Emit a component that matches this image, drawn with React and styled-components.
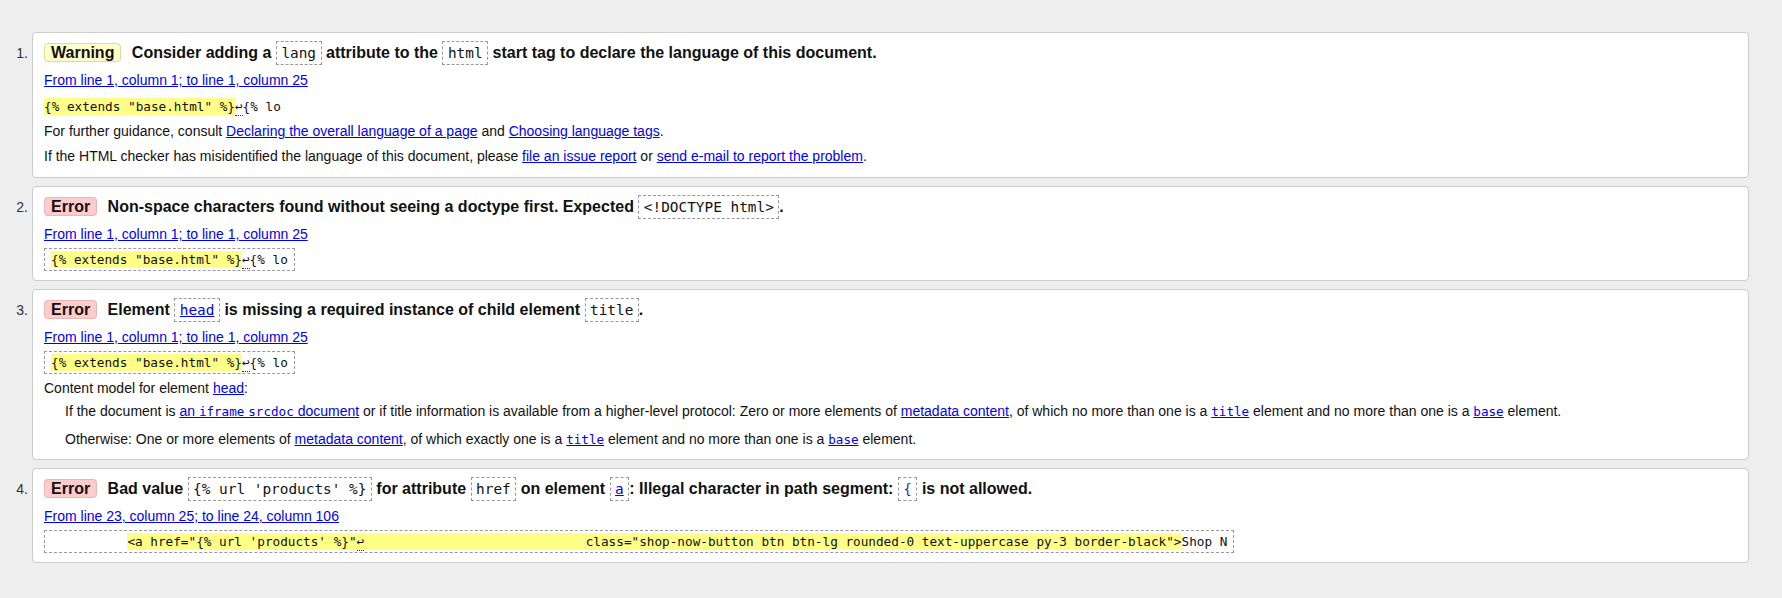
import React from "react";
import styled, { createGlobalStyle } from "styled-components";

const GlobalStyle = createGlobalStyle`
  html, body {
    margin: 0;
    padding: 0;
    background: #eee;
  }
  body {
    font-family: "Liberation Sans", Arial, sans-serif;
    font-size: 14px;
    color: #111;
  }
`;

const MessageList = styled.ol`
  margin: 0;
  padding: 32px 33px 30px 0;
  list-style: none;
`;

const Row = styled.li`
  display: flex;
  align-items: flex-start;
  & + li {
    margin-top: 8px;
  }
`;

const Number = styled.div`
  flex: 0 0 32px;
  box-sizing: border-box;
  padding: 9px 4px 0 0;
  text-align: right;
  line-height: 24px;
  color: #333;
`;

const Card = styled.div`
  flex: 1;
  min-width: 0;
  background: #fff;
  border: 1px solid #ccc;
  border-radius: 4px;
  padding: 8px 11px;
`;

const Title = styled.p`
  margin: 0;
  font-size: 16px;
  font-weight: bold;
  line-height: 24px;
  white-space: nowrap;
`;

const Badge = styled.span`
  padding: 0 6px;
  margin-right: 6px;
  border: 1px solid ${(p) => (p.$type === "warning" ? "#deda9e" : "#e6b9b9")};
  border-radius: 4px;
  background: ${(p) => (p.$type === "warning" ? "#ffc" : "#fcc")};
`;

const Code = styled.code`
  font-family: "DejaVu Sans Mono", "Liberation Mono", monospace;
  font-size: 14.4px;
  font-weight: normal;
  border: 1px dashed #999;
  padding: 3px 4.5px;
  color: ${(p) => p.$color || "inherit"};
`;

const Link = styled.a`
  color: #0000f0;
  text-decoration: underline;
  cursor: pointer;
`;

const CodeLink = styled(Link)`
  font-family: "DejaVu Sans Mono", "Liberation Mono", monospace;
  font-size: 12.6px;
`;

const Location = styled.p`
  margin: 3px 0 0;
  line-height: 25px;
`;

const ExtractLine = styled.p`
  margin: ${(p) => (p.$boxed ? "0" : "1px 0 0")};
  line-height: 25px;
  white-space: nowrap;
`;

const Extract = styled.code`
  font-family: "DejaVu Sans Mono", "Liberation Mono", monospace;
  font-size: 12.7px;
  line-height: 20px;
  white-space: pre;
  padding: ${(p) => (p.$boxed ? "3px 6px" : "0")};
  border: ${(p) => (p.$boxed ? "1px dashed #999" : "none")};
`;

const Mark = styled.mark`
  background: #ff8;
  color: inherit;
  padding: 1px 0;
`;

const LineFeed = styled.span`
  padding-bottom: 1px;
  border-bottom: 1px dotted #333;
`;

const Text = styled.p`
  margin: 0;
  line-height: 25px;
`;

const ModelList = styled.dl`
  margin: 0 0 1px;
`;

const ModelTerm = styled.dt`
  margin: 1px 0 0;
  line-height: 25px;
`;

const ModelItem = styled.dd`
  margin: 0 0 0 21px;
  line-height: 20px;
  & + dd {
    margin-top: 7px;
  }
`;

const Message = ({ n, type, title, location, extract, boxed, children }) => (
  <Row>
    <Number>{n}.</Number>
    <Card>
      <Title>
        <Badge $type={type}>{type === "warning" ? "Warning" : "Error"}</Badge>{" "}
        {title}
      </Title>
      <Location>
        <Link>{location}</Link>
      </Location>
      <ExtractLine $boxed={boxed}>
        <Extract $boxed={boxed}>{extract}</Extract>
      </ExtractLine>
      {children}
    </Card>
  </Row>
);

const baseExtract = (
  <>
    <Mark>{'{% extends "base.html" %}'}</Mark>
    <LineFeed>↩</LineFeed>
    {"{% lo"}
  </>
);

const anchorExtract = (
  <>
    {"          "}
    <Mark>
      {`<a href="{% url 'products' %}"`}
      <LineFeed>↩</LineFeed>
      {`                             class="shop-now-button btn btn-lg rounded-0 text-uppercase py-3 border-black">`}
    </Mark>
    {"Shop N"}
  </>
);

const App = () => (
  <>
    <GlobalStyle />
    <MessageList>
      <Message
        n={1}
        type="warning"
        location="From line 1, column 1; to line 1, column 25"
        extract={baseExtract}
        title={
          <>
            Consider adding a <Code>lang</Code> attribute to the{" "}
            <Code>html</Code> start tag to declare the language of this
            document.
          </>
        }
      >
        <Text>
          For further guidance, consult{" "}
          <Link>Declaring the overall language of a page</Link> and{" "}
          <Link>Choosing language tags</Link>.
        </Text>
        <Text>
          If the HTML checker has misidentified the language of this document,
          please <Link>file an issue report</Link> or{" "}
          <Link>send e-mail to report the problem</Link>.
        </Text>
      </Message>

      <Message
        n={2}
        type="error"
        boxed
        location="From line 1, column 1; to line 1, column 25"
        extract={baseExtract}
        title={
          <>
            Non-space characters found without seeing a doctype first.
            Expected <Code>{"<!DOCTYPE html>"}</Code>.
          </>
        }
      />

      <Message
        n={3}
        type="error"
        boxed
        location="From line 1, column 1; to line 1, column 25"
        extract={baseExtract}
        title={
          <>
            Element{" "}
            <Code>
              <Link>head</Link>
            </Code>{" "}
            is missing a required instance of child element <Code>title</Code>.
          </>
        }
      >
        <ModelList>
          <ModelTerm>
            Content model for element <Link>head</Link>:
          </ModelTerm>
          <ModelItem>
            If the document is{" "}
            <Link>
              an <CodeLink as="code">iframe</CodeLink>{" "}
              <CodeLink as="code">srcdoc</CodeLink> document
            </Link>{" "}
            or if title information is available from a higher-level protocol:
            Zero or more elements of <Link>metadata content</Link>, of which no
            more than one is a <CodeLink>title</CodeLink> element and no more
            than one is a <CodeLink>base</CodeLink> element.
          </ModelItem>
          <ModelItem>
            Otherwise: One or more elements of <Link>metadata content</Link>,
            of which exactly one is a <CodeLink>title</CodeLink> element and no
            more than one is a <CodeLink>base</CodeLink> element.
          </ModelItem>
        </ModelList>
      </Message>

      <Message
        n={4}
        type="error"
        boxed
        location="From line 23, column 25; to line 24, column 106"
        extract={anchorExtract}
        title={
          <>
            Bad value <Code>{"{% url 'products' %}"}</Code> for attribute{" "}
            <Code>href</Code> on element{" "}
            <Code>
              <Link>a</Link>
            </Code>
            : Illegal character in path segment:{" "}
            <Code $color="#3a2fb0">{"{"}</Code> is not allowed.
          </>
        }
      />
    </MessageList>
  </>
);

export default App;
